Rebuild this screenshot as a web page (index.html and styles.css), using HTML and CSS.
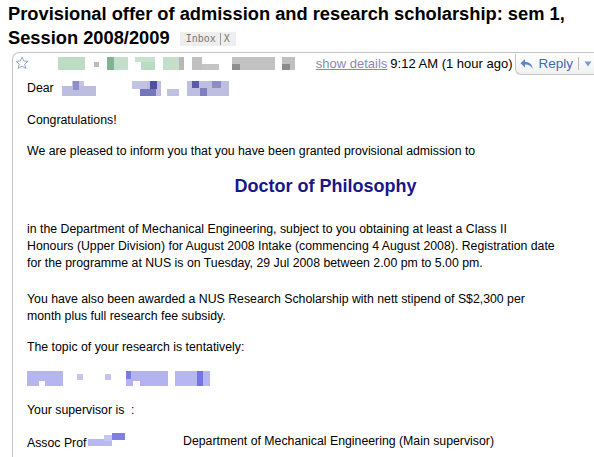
FILE: index.html
```html
<!DOCTYPE html>
<html lang="en">
<head>
    <meta charset="UTF-8">
    <title>Provisional offer of admission</title>
    <link rel="stylesheet" href="styles.css">
</head>
<body>
    <h1 class="subject">
        Provisional offer of admission and research scholarship: sem 1,<br>
        Session 2008/2009 <span class="label">Inbox<span class="label-sep"></span>X</span>
    </h1>

    <div class="message">
        <div class="msg-head">
            <div class="sender">
                <svg class="star" width="14" height="14" viewBox="0 0 14 14">
                    <path d="M7 1 L8.7 5 L13 5.3 L9.7 8.1 L10.8 12.5 L7 10.1 L3.2 12.5 L4.3 8.1 L1 5.3 L5.3 5 Z" fill="none" stroke="#9aa7c4" stroke-width="1"/>
                </svg>
                <!-- blurred sender name -->
                <svg class="blur" width="240" height="16" viewBox="0 0 240 16">
                    <rect x="1" y="1" width="27" height="13" fill="#bcdcc6"/>
                    <rect x="37" y="6" width="5" height="5" fill="#bcbcbc"/>
                    <rect x="50" y="1" width="7" height="13" fill="#82b291"/>
                    <rect x="57" y="1" width="14" height="13" fill="#c2dfcb"/>
                    <rect x="78" y="1" width="20" height="5" fill="#c6e2cf"/>
                    <rect x="84" y="6" width="14" height="8" fill="#b9dac3"/>
                    <rect x="106" y="1" width="16" height="13" fill="#c3dfcc"/>
                    <rect x="122" y="1" width="5" height="13" fill="#b8b8b8"/>
                    <rect x="135" y="1" width="10" height="13" fill="#c0c0c0"/>
                    <rect x="145" y="8" width="17" height="6" fill="#c4c4c4"/>
                    <rect x="175" y="1" width="43" height="13" fill="#c2c2c2"/>
                    <rect x="175" y="8" width="8" height="6" fill="#8e8e8e"/>
                    <rect x="225" y="1" width="13" height="13" fill="#c0c0c0"/>
                    <rect x="225" y="8" width="8" height="6" fill="#8c8c8c"/>
                </svg>
            </div>
            <div class="meta">
                <a class="details" href="#">show details</a>
                <span class="date">9:12 AM (1 hour ago)</span>
                <span class="reply-btn">
                    <svg width="14" height="12" viewBox="0 0 14 12">
                        <path d="M5 1 L0.5 5.2 L5 9.4 V6.6 C8.2 6.4 10.6 7.6 12.8 10.8 C12.3 6.6 9.6 4 5 3.7 Z" fill="#5b86c9"/>
                    </svg>
                    Reply
                    <span class="reply-sep"></span>
                    <svg width="8" height="6" viewBox="0 0 8 6">
                        <path d="M0.5 0.5 H7.5 L4 5.5 Z" fill="#7d9bd0"/>
                    </svg>
                </span>
            </div>
        </div>

        <div class="msg-body">
            <p>Dear
                <svg class="blur-inline" width="170" height="15" viewBox="0 0 170 15">
                    <rect x="0" y="5" width="34" height="10" fill="#bdbde0"/>
                    <rect x="10" y="0" width="12" height="5" fill="#c4c4e4"/>
                    <rect x="11" y="0" width="6" height="9" fill="#8e8ec8"/>
                    <rect x="70" y="0" width="15" height="8" fill="#c2c2e2"/>
                    <rect x="85" y="0" width="14" height="15" fill="#bcbce0"/>
                    <rect x="88" y="0" width="7" height="8" fill="#4f4fa2"/>
                    <rect x="78" y="8" width="16" height="7" fill="#7575ba"/>
                    <rect x="105" y="8" width="12" height="7" fill="#c0c0e2"/>
                    <rect x="125" y="0" width="42" height="15" fill="#bebee1"/>
                    <rect x="130" y="0" width="7" height="7" fill="#5a5aa8"/>
                    <rect x="138" y="7" width="7" height="8" fill="#8080c0"/>
                    <rect x="150" y="0" width="9" height="7" fill="#8c8cc6"/>
                </svg>
            </p>
            <p class="greet">Congratulations!</p>
            <p>We are pleased to inform you that you have been granted provisional admission to</p>
            <p class="degree">Doctor of Philosophy</p>
            <p class="para">in the Department of Mechanical Engineering, subject to you obtaining at least a Class II<br>
                Honours (Upper Division) for August 2008 Intake (commencing 4 August 2008). Registration date<br>
                for the programme at NUS is on Tuesday, 29 Jul 2008 between 2.00 pm to 5.00 pm.</p>
            <p class="para para-last">You have also been awarded a NUS Research Scholarship with nett stipend of S$2,300 per<br>
                month plus full research fee subsidy.</p>
            <p>The topic of your research is tentatively:</p>
            <svg class="topic" width="190" height="15" viewBox="0 0 190 15">
                <rect x="0" y="0" width="36" height="15" fill="#b5b5f2"/>
                <rect x="12" y="10" width="6" height="5" fill="#ffffff"/>
                <rect x="50" y="3" width="6" height="6" fill="#c6c6ea"/>
                <rect x="78" y="3" width="6" height="6" fill="#c3c3ec"/>
                <rect x="99" y="0" width="42" height="15" fill="#b3b3f2"/>
                <rect x="99" y="0" width="5" height="8" fill="#7a7ae6"/>
                <rect x="106" y="10" width="7" height="5" fill="#ffffff"/>
                <rect x="148" y="0" width="35" height="15" fill="#b6b6f2"/>
                <rect x="170" y="0" width="6" height="15" fill="#7474e6"/>
            </svg>
            <p class="supervisor">Your supervisor is &nbsp;:</p>
            <p class="assoc">
                <span class="prof">Assoc Prof<svg width="38" height="13" viewBox="0 0 38 13">
                    <rect x="0" y="6" width="24" height="7" fill="#b9b9f0"/>
                    <rect x="16" y="2" width="8" height="6" fill="#c6c6f2"/>
                    <rect x="24" y="0" width="13" height="7" fill="#7f7fe0"/>
                </svg></span>
                <span>Department of Mechanical Engineering (Main supervisor)</span>
            </p>
        </div>
    </div>
</body>
</html>
```

FILE: styles.css
```css
/* General Styles */
* {
    margin: 0;
    padding: 0;
    box-sizing: border-box;
}

body {
    font-family: "Liberation Sans", Arial, sans-serif;
    background-color: #fff;
    color: #000;
    width: 594px;
    height: 457px;
    overflow: hidden;
    padding: 2px 0 0 8px;
}

.subject {
    font-size: 18.3px;
    font-weight: bold;
    line-height: 24px;
    white-space: nowrap;
}

.label {
    display: inline-flex;
    align-items: center;
    vertical-align: 2px;
    margin-left: 5px;
    padding: 0 6px;
    height: 14px;
    background-color: #eeeeee;
    color: #777;
    font-family: "DejaVu Sans Mono", monospace;
    font-size: 10px;
    font-weight: normal;
}

.label-sep {
    width: 1px;
    height: 12px;
    background-color: #999;
    margin: 0 3px 0 4px;
}

/* Message card */
.message {
    margin: 2px 0 0 4px;
    width: 640px;
    border-left: 1px solid #c3c3c3;
    border-top: 1px solid #c3c3c3;
    border-bottom: 1px solid #d6d6d6;
    border-top-left-radius: 7px;
}

.msg-head {
    width: 581px;
    height: 21px;
    display: flex;
    justify-content: space-between;
    align-items: center;
}

.sender {
    display: flex;
    align-items: center;
    gap: 28px;
    padding-left: 2px;
}

.star {
    margin-top: -2px;
}

.meta {
    display: flex;
    align-items: center;
    font-size: 13px;
    height: 21px;
}

.details {
    color: #8a8aa8;
    text-decoration: underline;
    margin-right: 3px;
}

.date {
    margin-right: 3px;
}

.reply-btn {
    display: flex;
    align-items: center;
    gap: 4px;
    height: 21px;
    padding: 0 2px 0 4px;
    margin-top: 1px;
    border: 1px solid #c6c6c6;
    border-top: none;
    border-right: none;
    border-bottom-left-radius: 6px;
    background: linear-gradient(#ffffff, #f1f1f1);
    color: #3d69ad;
    font-size: 13.5px;
}

.reply-sep {
    width: 1px;
    height: 13px;
    background-color: #b9b9b9;
    margin: 0 1px 0 1px;
}

.msg-body {
    padding: 6px 0 6px 14px;
    font-size: 12.3px;
    line-height: 17px;
}

.msg-body p {
    margin-bottom: 15px;
    white-space: nowrap;
}

.msg-body .greet {
    margin-bottom: 14px;
}

.blur-inline {
    vertical-align: -4px;
    margin-left: 5px;
}

.degree {
    text-align: center;
    width: 597px;
    font-size: 18px;
    line-height: 22px;
    font-weight: bold;
    color: #17178a;
    margin-top: 13px;
}

.msg-body .degree {
    margin-bottom: 24px;
}

.msg-body .para {
    margin-bottom: 19px;
}

.msg-body .para-last {
    margin-bottom: 14px;
}

.topic {
    display: block;
    margin-bottom: 16px;
}

.msg-body .supervisor {
    margin-bottom: 14px;
}

.assoc {
    display: flex;
}

.prof {
    width: 156px;
}

.prof svg {
    vertical-align: 1px;
    margin-left: 2px;
}

.msg-body .assoc {
    margin-bottom: 0;
}
```
